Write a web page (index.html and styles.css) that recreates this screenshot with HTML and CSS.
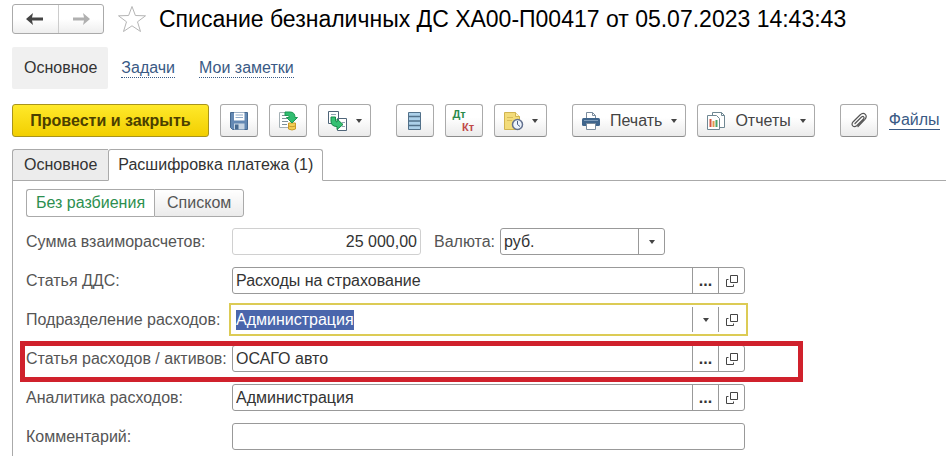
FILE: index.html
```html
<!DOCTYPE html>
<html lang="ru">
<head>
  <meta charset="UTF-8" />
  <meta name="viewport" content="width=device-width, initial-scale=1.0"/>
  <title>Списание безналичных ДС</title>
  <link rel="stylesheet" href="styles.css">
</head>
<body>
  <svg class="sprite" width="0" height="0" aria-hidden="true">
    <symbol id="icon-open" viewBox="0 0 14 14">
      <path d="M5.500 1.500h7v7h-7zM3.500 5.500h-2v7h7v-2" fill="none" stroke="#444" stroke-width="1"/>
    </symbol>
    <symbol id="icon-arrow" viewBox="0 0 18 12">
      <path d="M0 6L7 0 6 4.500H17V7.500H6L7 12Z"/>
    </symbol>
  </svg>

  <header class="title-bar">
    <div class="history">
      <button type="button" class="history-btn" aria-label="Назад"><svg width="18" height="12"><use href="#icon-arrow"/></svg></button>
      <button type="button" class="history-btn forward" aria-label="Вперед"><svg width="18" height="12"><use href="#icon-arrow" transform="matrix(-1 0 0 1 18 0)"/></svg></button>
    </div>
    <button type="button" class="star" aria-label="В избранное">
      <svg width="30" height="28" viewBox="0 0 30 28"><path d="M15 1.500L18.400 10.500 28.500 10.800 20.500 16.800 23.500 26.500 15 20.800 6.500 26.500 9.500 16.800 1.500 10.800 11.600 10.500Z" fill="#fff" stroke="#b5b5b5"/></svg>
    </button>
    <h1>Списание безналичных ДС ХА00-П00417 от 05.07.2023 14:43:43</h1>
  </header>

  <nav class="sections">
    <span class="section-current">Основное</span>
    <a href="#tasks">Задачи</a>
    <a href="#notes">Мои заметки</a>
  </nav>

  <div class="toolbar">
    <button type="button" class="btn btn-main">Провести и закрыть</button>
    <button type="button" class="btn btn-icon" aria-label="Записать">
      <svg width="20" height="20" viewBox="0 0 20 20">
        <path d="M1.500 1.500h17v17h-15l-2-2z" fill="#6489b4" stroke="#456990"/>
        <path d="M5 1.500h10.500v8H5z" fill="#fff"/>
        <path d="M6.500 4h7.500M6.500 6.500h7.500" stroke="#91abc8"/>
        <path d="M5 12.500h10.500v6H5z" fill="#c7d5e3"/>
        <path d="M6 13.500h3.500v5H6z" fill="#456990"/>
      </svg>
    </button>
    <button type="button" class="btn btn-icon" aria-label="Провести">
      <svg width="20" height="20" viewBox="0 0 20 20">
        <path d="M1.500 1.500h12v15h-12z" fill="#fff" stroke="#a5b0b5"/>
        <path d="M4 4.500h6M4 7.500h5M4 10.500h6M4 13.500h5" stroke="#7f9099"/>
        <path d="M10.500 12h7v6q-3.500 2-7 0z" fill="#f3cf55" stroke="#c99a2a"/>
        <path d="M10.500 15q3.500 1.500 7 0" fill="none" stroke="#c99a2a"/>
        <path d="M7 1h5q5 0 5 5.500h2.500l-5.500 5.500-5.500-5.500h3q0-2-2-2H7z" fill="#31bd70" stroke="#1b9852"/>
      </svg>
    </button>
    <button type="button" class="btn btn-drop space-after" aria-label="Создать на основании">
      <svg width="21" height="20" viewBox="0 0 21 20">
        <path d="M1.500 .5h10v12h-10zM10.500 7.500h9v12h-9z" fill="#fff" stroke="#4f6579"/>
        <path d="M4 3.500h5M15 11.500h3M15 15.500h3" stroke="#91a3b2"/>
        <path d="M4 6h4.500v3q0 2 1.500 2V8l6 5.500-6 5v-3Q4 15.500 4 10z" fill="#35c172" stroke="#168948"/>
      </svg>
      <span class="caret"></span>
    </button>
    <button type="button" class="btn btn-icon" aria-label="Движения документа">
      <svg width="16" height="20" viewBox="0 0 16 20">
        <path d="M1.500 1.500h12v17h-12z" fill="#acd0e9" stroke="#52718a"/>
        <path d="M1.500 5.500h12M1.500 10h12M1.500 14.500h12" stroke="#52718a" stroke-width="1.500"/>
      </svg>
    </button>
    <button type="button" class="btn btn-icon dtkt" aria-label="Проводки Дт Кт">
      <span class="dt">Дт</span>
      <span class="kt">Кт</span>
    </button>
    <button type="button" class="btn btn-drop space-after" aria-label="История">
      <svg width="21" height="20" viewBox="0 0 21 20">
        <path d="M1.500 1.500h11l4 4v13h-15z" fill="#f3dc7a" stroke="#d1b450"/>
        <path d="M12.500 1.500v4h4" fill="#fff5c5" stroke="#d1b450"/>
        <path d="M4 6.500h6M4 9.500h5" stroke="#d9bd59"/>
        <circle cx="14.500" cy="13.500" r="5" fill="#edf4fc" stroke="#63718f" stroke-width="1.500"/>
        <path d="M14.500 10v3.500l2.500 2" fill="none" stroke="#4a5c80"/>
      </svg>
      <span class="caret"></span>
    </button>
    <button type="button" class="btn btn-text">
      <svg width="20" height="20" viewBox="0 0 20 20">
        <path d="M5.500 8V1.500h6l3 3V8" fill="#fff" stroke="#7b8d9e"/>
        <path d="M11.500 1.500v3h3" fill="none" stroke="#7b8d9e"/>
        <rect x="1" y="7" width="18" height="8" rx="1.500" fill="#3f658c"/>
        <path d="M3 9.500h14" stroke="#7e9cba"/>
        <path d="M5.500 12.500h9v6h-9z" fill="#fff" stroke="#7b8d9e"/>
      </svg>
      Печать
      <span class="caret"></span>
    </button>
    <button type="button" class="btn btn-text space-after">
      <svg width="20" height="20" viewBox="0 0 20 20">
        <path d="M6.500 1.500h9l3 3v12h-12z" fill="#fff" stroke="#6f8792"/>
        <path d="M15.500 1.500v3h3" fill="none" stroke="#6f8792"/>
        <path d="M1.500 4.500h9l3 3v11h-12z" fill="#fff" stroke="#6f8792"/>
        <path d="M4.500 8v8" stroke="#d35743" stroke-width="2"/>
        <path d="M7.500 10v6" stroke="#e09a4f" stroke-width="2"/>
        <path d="M10.500 9v7" stroke="#4ba568" stroke-width="2"/>
      </svg>
      Отчеты
      <span class="caret"></span>
    </button>
    <button type="button" class="btn btn-icon" aria-label="Прикрепить файл">
      <svg width="18" height="18" viewBox="0 0 18 18">
        <path d="M5 11.500L11.500 5q1.500-1 2.200-.2.800.8-.2 2.200L7 13.500q-2.500 2-4.200.4-1.700-1.800.4-4.200L10 3q3-2.700 5.300-.6 2.100 2.200-.6 5.300L8 14.500" fill="none" stroke="#555" stroke-width="1.200" stroke-linecap="round"/>
      </svg>
    </button>
    <a href="#files" class="files-link">Файлы</a>
  </div>

  <div class="tabs" role="tablist">
    <button type="button" class="tab" role="tab" aria-selected="false">Основное</button>
    <button type="button" class="tab active" role="tab" aria-selected="true">Расшифровка платежа (1)</button>
  </div>

  <main class="panel">
    <div class="toggle">
      <button type="button" class="toggle-btn on">Без разбиения</button>
      <button type="button" class="toggle-btn">Списком</button>
    </div>

    <form class="payment-form">
      <div class="row">
        <label for="amount">Сумма взаиморасчетов:</label>
        <div class="amount-line">
          <input type="text" id="amount" class="amount" value="25 000,00" readonly>
          <label for="currency">Валюта:</label>
          <div class="select-box">
            <select id="currency"><option>руб.</option></select>
            <span class="select-arrow"><span class="caret"></span></span>
          </div>
        </div>
      </div>

      <div class="row">
        <label for="cashflow">Статья ДДС:</label>
        <div class="field">
          <input type="text" id="cashflow" value="Расходы на страхование">
          <button type="button" class="dots" aria-label="Выбрать">...</button>
          <button type="button" aria-label="Открыть"><svg width="14" height="14"><use href="#icon-open"/></svg></button>
        </div>
      </div>

      <div class="row">
        <label for="department">Подразделение расходов:</label>
        <div class="field current">
          <input type="text" id="department" value="Администрация">
          <button type="button" aria-label="Показать список"><span class="caret"></span></button>
          <button type="button" aria-label="Открыть"><svg width="14" height="14"><use href="#icon-open"/></svg></button>
        </div>
      </div>

      <div class="row marked">
        <label for="expense">Статья расходов / активов:</label>
        <div class="field">
          <input type="text" id="expense" value="ОСАГО авто">
          <button type="button" class="dots" aria-label="Выбрать">...</button>
          <button type="button" aria-label="Открыть"><svg width="14" height="14"><use href="#icon-open"/></svg></button>
        </div>
      </div>

      <div class="row">
        <label for="analytics">Аналитика расходов:</label>
        <div class="field">
          <input type="text" id="analytics" value="Администрация">
          <button type="button" class="dots" aria-label="Выбрать">...</button>
          <button type="button" aria-label="Открыть"><svg width="14" height="14"><use href="#icon-open"/></svg></button>
        </div>
      </div>

      <div class="row">
        <label for="comment">Комментарий:</label>
        <div class="field">
          <input type="text" id="comment">
        </div>
      </div>
    </form>
  </main>

  <script>
    const department = document.getElementById('department');
    department.focus();
    department.select();
  </script>
</body>
</html>
```
FILE: styles.css
```css
* {
  box-sizing: border-box;
}

body {
  margin: 0;
  padding: 4px 0 0 12px;
  min-height: 100vh;
  display: flex;
  flex-direction: column;
  overflow: hidden;
  background: #fff;
  color: #333;
  font-family: "Liberation Sans", Arial, sans-serif;
  font-size: 16px;
  line-height: 20px;
}

button, input, select {
  font: inherit;
  color: inherit;
}

button {
  display: flex;
  align-items: center;
  justify-content: center;
  flex: none;
  padding: 0;
  background: none;
  border: none;
  cursor: pointer;
  white-space: nowrap;
}

svg {
  flex: none;
}

a {
  color: #3a5a85;
  text-decoration: none;
}

.sprite {
  position: absolute;
}

.caret {
  border: 3px solid transparent;
  border-top: 4px solid #444;
  border-bottom: 0;
}

/* title */
.title-bar {
  display: flex;
  align-items: center;
  height: 30px;
}

.history {
  display: flex;
  height: 30px;
  width: 92px;
  border: 1px solid #aaa;
  border-radius: 3px;
  background: linear-gradient(#fff 50%, #eee);
}

.history-btn {
  flex: 1;
  fill: #444;
}

.forward {
  border-left: 1px solid #ccc;
  fill: #b0b0b0;
}

.star {
  margin: 0 12px 0 13px;
}

h1 {
  margin: 0;
  color: #000;
  font-size: 23px;
  font-weight: normal;
  line-height: 30px;
  white-space: nowrap;
}

/* sections */
.sections {
  display: flex;
  align-items: center;
  gap: 24px;
  margin-top: 13px;
}

.sections a {
  border-bottom: 1px dotted #3a5a85;
  line-height: 18px;
}

.section-current {
  padding: 11px;
  padding-left: 12px;
  margin-right: -11px;
  background: #f0f0f0;
  border-radius: 2px;
}

/* toolbar */
.toolbar {
  display: flex;
  align-items: center;
  gap: 11px;
  margin-top: 15px;
}

.btn {
  height: 33px;
  border: 1px solid #aaa;
  border-bottom-color: #8c8c8c;
  border-radius: 3px;
  background: linear-gradient(#fff 40%, #ebebeb);
  color: #444;
}

.btn-main {
  width: 197px;
  border-color: #a8941c;
  background: linear-gradient(#ffe92b, #f2cf00);
  color: #4b4000;
  font-weight: bold;
}

.btn-icon {
  width: 38px;
}

.btn-drop {
  width: 53px;
  gap: 8px;
}

.btn-text {
  padding: 0 8px;
  gap: 9px;
}

.space-after {
  margin-right: 14px;
}

.dtkt {
  flex-direction: column;
  font-size: 11px;
  font-weight: bold;
  line-height: 13px;
}

.dt {
  margin-right: 10px;
  color: #2c8a4b;
}

.kt {
  margin-left: 8px;
  color: #c04848;
}

.files-link {
  border-bottom: 1px solid #3a5a85;
  line-height: 18px;
}

/* tabs */
.tabs {
  display: flex;
  margin-top: 12px;
}

.tabs::after {
  content: "";
  flex: 1;
  border-bottom: 1px solid #aaa;
}

.tab {
  height: 32px;
  padding: 0 11px;
  border: 1px solid #aaa;
  border-right: 0;
  border-radius: 3px 0 0 0;
  background: #ececec;
}

.tab.active {
  padding: 0 9px;
  border-right: 1px solid #aaa;
  border-bottom-color: #fff;
  border-radius: 3px 3px 0 0;
  background: #fff;
}

.panel {
  flex: 1;
  padding: 8px 0 5px 13px;
  border-left: 1px solid #aaa;
}

.toggle {
  display: flex;
}

.toggle-btn {
  height: 28px;
  padding: 0 12px;
  border: 1px solid #aaa;
  border-radius: 0 3px 3px 0;
  background: linear-gradient(#fff, #ebebeb);
  color: #555;
}

.toggle-btn.on {
  padding: 0 9px;
  border-right: 0;
  border-radius: 3px 0 0 3px;
  background: #fff;
  color: #2c8f4f;
}

/* form */
.payment-form {
  display: flex;
  flex-direction: column;
  gap: 12px;
  margin-top: 11px;
}

.row {
  display: grid;
  grid-template-columns: 206px minmax(0, 513px);
  align-items: center;
  position: relative;
  max-width: 777px;
}

label {
  color: #555;
  white-space: nowrap;
}

.amount-line {
  display: flex;
  align-items: center;
}

.amount {
  width: 189px;
  height: 27px;
  margin-right: 13px;
  padding: 0 3px;
  border: 1px solid #d0d0d0;
  border-radius: 3px;
  text-align: right;
}

.select-box {
  position: relative;
  width: 165px;
  margin-left: auto;
  margin-right: 80px;
}

select {
  display: block;
  appearance: none;
  width: 100%;
  height: 27px;
  padding: 0 30px 0 3px;
  border: 1px solid #999;
  border-radius: 3px;
  background: #fff;
}

.select-arrow {
  position: absolute;
  top: 0;
  right: 0;
  bottom: 0;
  width: 27px;
  display: flex;
  align-items: center;
  justify-content: center;
  border-left: 1px solid #999;
  pointer-events: none;
}

.field {
  display: flex;
  height: 27px;
  border: 1px solid #999;
  border-radius: 3px;
  background: #fff;
}

.field input {
  flex: 1;
  min-width: 0;
  padding: 0 3px;
  border: none;
  outline: none;
  background: none;
}

.field button {
  width: 26px;
  border-left: 1px solid #999;
}

.field .dots {
  font-weight: bold;
}

.field.current {
  border-color: transparent;
  border-radius: 0;
  outline: 2px solid #dccb55;
  outline-offset: 1px;
}

.field input::selection {
  background: #4a66ac;
  color: #fff;
}

/* red frame around the row */
.marked::after {
  content: "";
  position: absolute;
  top: -4px;
  right: 0;
  bottom: -10px;
  left: -6px;
  border: 5px solid #d0212c;
  pointer-events: none;
}
```
